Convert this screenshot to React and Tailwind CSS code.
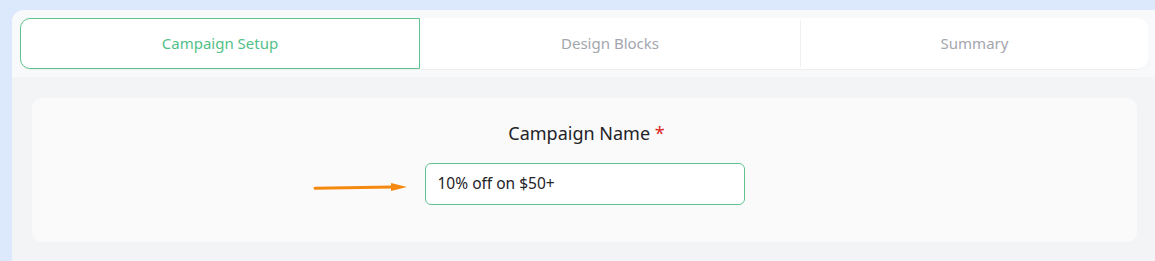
import React from "react";

export default function App() {
  return (
    <div className="w-[1155px] h-[261px] overflow-hidden bg-[#dce8fc] pt-[10px] pl-[12px]" style={{ fontFamily: '"Noto Sans", "Open Sans", sans-serif' }}>
      <div className="h-full rounded-tl-[12px] bg-[#f3f4f6] overflow-hidden">
        <div className="bg-[#f8f9fa] pl-[8px] pr-[7px] pt-[8px] pb-[7px]">
          <div className="flex h-[52px] rounded-[10px] bg-white border-b border-[#eceef0]">
            <div className="w-[400px] flex items-center justify-center rounded-l-[10px] border border-[#5ec28e] text-[15px] text-[#52bf88]">
              Campaign Setup
            </div>
            <div className="w-[380px] flex items-center justify-center text-[15px] text-[#a3a6ad]">
              Design Blocks
            </div>
            <div className="my-[2px] w-px bg-[#eef0f2]" />
            <div className="flex-1 flex items-center justify-center text-[15px] text-[#a3a6ad]">
              Summary
            </div>
          </div>
        </div>
        <div className="pl-[20px] pr-[18px] pt-[21px]">
          <div className="h-[144px] rounded-[10px] bg-[#fafafa] flex flex-col items-center pt-[21px]">
            <div className="text-[18px] leading-[28px] text-[#1f2328] pl-[4px]">
              Campaign Name <span className="text-[#dc2626]">*</span>
            </div>
            <div className="relative mt-[16px]">
              <svg className="absolute left-[-112px] top-[17px]" width="96" height="14" viewBox="0 0 96 14">
                <path d="M2 8.2 L80 7" stroke="#f5890f" strokeWidth="3" strokeLinecap="round" fill="none" />
                <path d="M78 3 L94 7 L78 11 Z" fill="#f5890f" />
              </svg>
              <div className="w-[320px] h-[42px] rounded-[6px] border border-[#5ec28e] bg-white flex items-center pl-[12px] text-[15.5px] text-[#1f2328]">
                10% off on $50+
              </div>
            </div>
          </div>
        </div>
      </div>
    </div>
  );
}
